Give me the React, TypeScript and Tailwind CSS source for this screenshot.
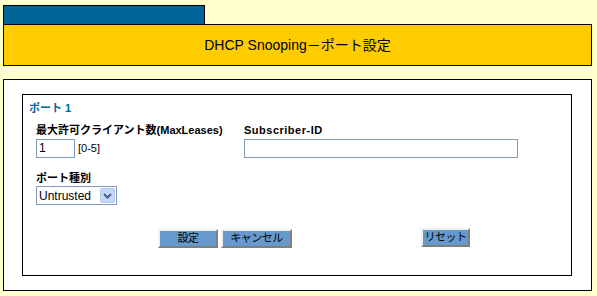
import React from "react";

const jp = { fontFamily: '"Liberation Sans", "Noto Sans CJK JP", sans-serif' };

function Btn({ label, w }: { label: string; w: string }) {
  return (
    <div
      className={`${w} h-[19px] bg-[#6699cc] border-t-2 border-l-2 border-b-2 border-r-2 border-t-[#f0f0f0] border-l-[#f0f0f0] border-b-[#808078] border-r-[#808078] flex items-center justify-center text-[11px] tracking-[-0.5px] whitespace-nowrap leading-none text-black`}
    >
      {label}
    </div>
  );
}

export default function App() {
  return (
    <div className="w-[597px] h-[296px] bg-[#ffffcc] pt-[5px] px-[3px] overflow-hidden" style={jp}>
      <div className="w-[202px] h-[19px] bg-[#006699] border border-black border-b-0" />
      <div className="w-[589px] h-[42px] bg-[#ffcc00] border border-black flex items-center justify-center text-[14px] text-black">
        DHCP Snooping－ポート設定
      </div>
      <div className="mt-[13px] w-[589px] h-[212px] bg-white border border-black pt-[14px] pl-[18px]">
        <div className="w-[550px] h-[182px] border border-black">
          <div className="mt-[6px] ml-[6px] h-[14px] leading-[14px] text-[11px] font-bold text-[#006699]">
            ポート 1
          </div>
          <div className="flex mt-[8px] ml-[13px]">
            <div className="w-[208px]">
              <div className="h-[14px] leading-[14px] text-[11px] font-bold text-black">
                最大許可クライアント数(MaxLeases)
              </div>
              <div className="mt-[2px] flex items-center">
                <div className="w-[39px] h-[19px] border border-[#7f9db9] bg-white text-[12px] leading-[17px] pl-[2px]">1</div>
                <span className="ml-[3px] text-[11px] text-black">[0-5]</span>
              </div>
            </div>
            <div>
              <div className="h-[14px] leading-[14px] text-[11px] font-bold tracking-[0.5px] text-black">Subscriber-ID</div>
              <div className="mt-[2px] w-[274px] h-[19px] border border-[#7f9db9] bg-white" />
            </div>
          </div>
          <div className="ml-[13px] mt-[13px] h-[14px] leading-[14px] text-[11px] font-bold text-black">ポート種別</div>
          <div className="ml-[13px] mt-[1px] w-[81px] h-[19px] border border-[#7f9db9] bg-white flex items-center justify-between pl-[2px] pr-[1px]">
            <span className="text-[12px] leading-none text-black">Untrusted</span>
            <div className="w-[15px] h-[15px] rounded-[2px] bg-[#c4d6fa] border border-[#b5c9f0] flex items-center justify-center">
              <svg width="9" height="6" viewBox="0 0 9 6">
                <path d="M1 1 L4.5 4.5 L8 1" stroke="#4d6185" strokeWidth="2" fill="none" />
              </svg>
            </div>
          </div>
          <div className="mt-[24px] ml-[135px] flex">
            <Btn label="設定" w="w-[60px]" />
            <div className="ml-[3px]">
              <Btn label="キャンセル" w="w-[71px]" />
            </div>
            <div className="ml-[129px] -mt-[1px]">
              <Btn label="リセット" w="w-[49px]" />
            </div>
          </div>
        </div>
      </div>
    </div>
  );
}
